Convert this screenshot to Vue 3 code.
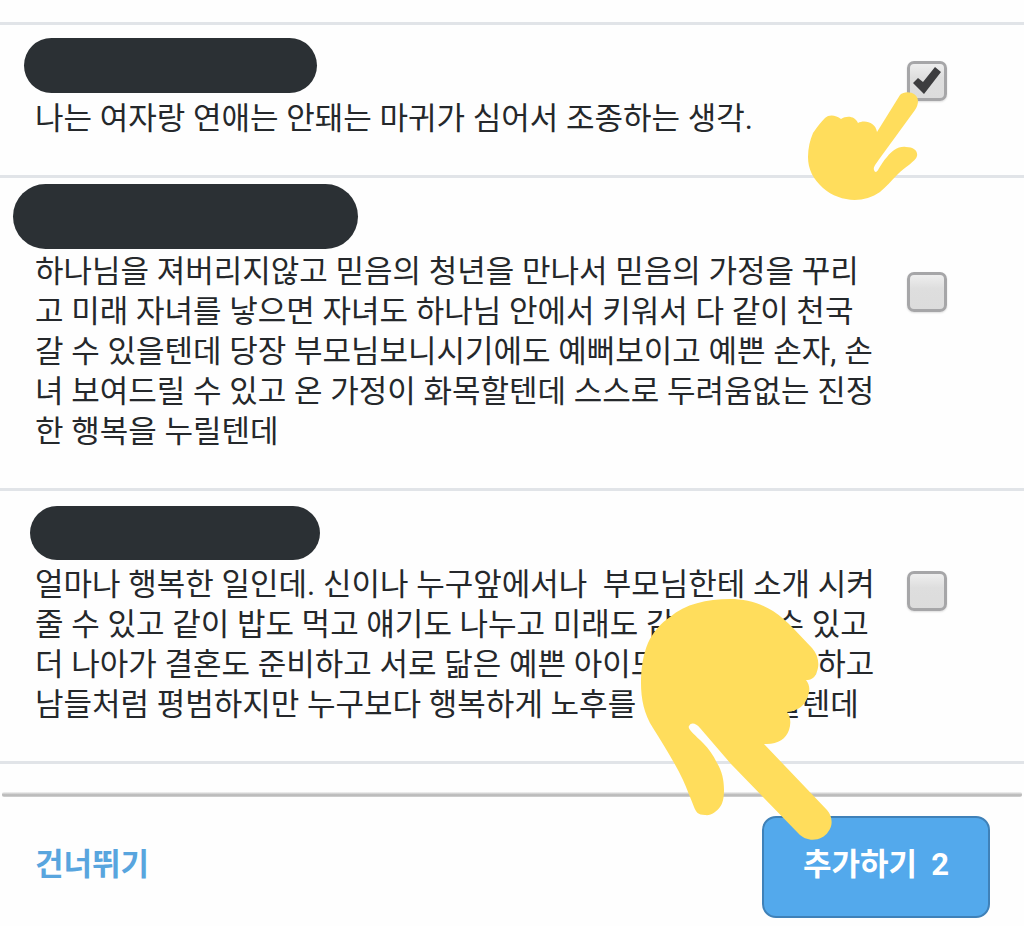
<script setup>
import { ref } from 'vue'

const items = ref([
  {
    id: 'first',
    checked: true,
    text: '나는 여자랑 연애는 안돼는 마귀가 심어서 조종하는 생각.',
  },
  {
    id: 'second',
    checked: false,
    text: '하나님을 져버리지않고 믿음의 청년을 만나서 믿음의 가정을 꾸리고 미래 자녀를 낳으면 자녀도 하나님 안에서 키워서 다 같이 천국 갈 수 있을텐데 당장 부모님보니시기에도 예뻐보이고 예쁜 손자, 손녀 보여드릴 수 있고 온 가정이 화목할텐데 스스로 두려움없는 진정한 행복을 누릴텐데',
  },
  {
    id: 'third',
    checked: false,
    text: '얼마나 행복한 일인데. 신이나 누구앞에서나 \u00a0부모님한테 소개 시켜줄 수 있고 같이 밥도 먹고 얘기도 나누고 미래도 같이 꿈꿀 수 있고 더 나아가 결혼도 준비하고 서로 닮은 예쁜 아이도 낳고 사랑도하고 남들처럼 평범하지만 누구보다 행복하게 노후를 이룰 수 있을텐데',
  },
])
</script>

<template>
  <main class="page">
    <ul class="list">
      <li v-for="item in items" :key="item.id" class="item">
        <div class="body">
          <div class="name"><span class="mask" :class="item.id"></span></div>
          <label class="text" :for="item.id">{{ item.text }}</label>
        </div>
        <div class="tick">
          <span class="box">
            <input :id="item.id" v-model="item.checked" type="checkbox" />
            <svg v-if="item.checked" class="mark" viewBox="0 0 40 40" aria-hidden="true">
              <path d="M6 22l5-5 5 4L28 6l6 5L17 33z" />
            </svg>
          </span>
        </div>
        <svg v-if="item.id === 'first'" class="hand up" viewBox="0 0 112 110" aria-hidden="true">
          <path d="M93 3C98-2 111 0 111 9c0 3-1 6-3 9L73 66c-4 6-7 9-6 12 1 3 3 2 4 0 3-5 6-10 9-13 5-6 11-11 19-10 8 0 12 4 11 9-1 5-12 11-20 19-6 6-11 12-17 17-17 12-41 10-57-4C6 87 1 77 1 65c0-9 2-17 5-24 4-6 8-11 12-15 4-4 11-3 16 1 6-4 14-3 17 4 7-4 18 0 19 9z" />
        </svg>
      </li>
    </ul>
    <footer class="bar">
      <button class="skip" type="button">건너뛰기</button>
      <button class="add" type="button"><span>추가하기</span><span>2</span></button>
      <svg class="hand down" viewBox="0 0 192 244" aria-hidden="true">
        <path d="M90 1c16 0 30 4 43 12 8 5 14 11 20 17l19 20c7 8 8 18 4 26-2 4-5 6-10 6 4 5 4 10 2 16-3 9-9 15-21 16 4 5 4 12 2 18-3 9-12 15-25 14l63 66c6 7 6 16 1 22-5 8-20 12-30 1L91 166 60 130c-4-5-9-6-11-2-2 3 6 9 14 17 6 6 10 12 14 20 5 8 7 17 7 27 0 7-1 13-4 17-4 5-9 9-15 8-7 0-9-3-11-8-4-10-7-18-11-27C35 165 23 146 13 130 4 116 1 101 1 85c0-15 2-28 7-40 5-11 13-20 22-26C45 6 67 1 90 1z" />
      </svg>
    </footer>
  </main>
</template>

<style>
body {
  margin: 0;
  background: #fefefe;
}
</style>

<style scoped>
.page {
  min-height: 100vh;
  box-sizing: border-box;
  padding-top: 22px;
  display: flex;
  flex-direction: column;
  overflow: hidden;
  background: #fefefe;
  color: #25282b;
  font-family: Roboto, "Noto Sans CJK KR", sans-serif;
}
.list {
  margin: 0;
  padding: 0;
  list-style: none;
  border-bottom: 3px solid #e1e4e8;
}
.item {
  position: relative;
  display: flex;
  border-top: 3px solid #e1e4e8;
}
.body {
  flex: 1;
  padding: 34px 32px 36px 35px;
}
.name {
  position: relative;
  height: 40px;
}
.mask {
  position: absolute;
  border-radius: 33px;
  background: #2b3034;
}
.mask.first {
  left: -11px;
  top: -21px;
  width: 293px;
  height: 55px;
}
.mask.second {
  left: -22px;
  top: -28px;
  width: 345px;
  height: 65px;
}
.mask.third {
  left: -5px;
  top: -19px;
  width: 290px;
  height: 54px;
}
.text {
  display: block;
  font-size: 31px;
  line-height: 40px;
}
.tick {
  display: flex;
  flex-direction: column;
  padding: 0 77px 9px 0;
}
.tick::before {
  content: "";
  flex: 36;
}
.tick::after {
  content: "";
  flex: 64;
}
.box {
  position: relative;
  display: block;
  width: 40px;
  height: 40px;
}
.box input {
  appearance: none;
  display: block;
  box-sizing: border-box;
  width: 100%;
  height: 100%;
  margin: 0;
  border: 3px solid #a6a6a8;
  border-radius: 7px;
  background: linear-gradient(#eeeeee, #dedede 40%, #dcdcdc);
  box-shadow: 0 1px 2px #dddddd;
}
.mark {
  position: absolute;
  inset: 0;
  width: 100%;
  height: 100%;
  fill: #3d3d3f;
  pointer-events: none;
}
.hand {
  position: absolute;
  z-index: 2;
  fill: #ffdd5c;
  pointer-events: none;
}
.hand.up {
  right: 105px;
  top: 67px;
  width: 112px;
  height: 110px;
}
.bar {
  position: relative;
  flex: 1;
  display: flex;
  justify-content: space-between;
  align-items: flex-start;
  margin-top: 32px;
  padding: 20px 34px 8px 35px;
}
.bar::before {
  content: "";
  position: absolute;
  left: 2px;
  right: 2px;
  top: -4px;
  height: 5px;
  border-radius: 2px;
  background: linear-gradient(#f4f4f4, #b4b4b4 60%, #d4d4d4);
}
.skip,
.add {
  border: 0;
  padding: 0;
  font: 700 31px/46px Roboto, "Noto Sans CJK KR", sans-serif;
}
.skip {
  margin-top: 26px;
  background: none;
  color: #58a5de;
}
.add {
  display: flex;
  justify-content: center;
  gap: 14px;
  box-sizing: border-box;
  width: 228px;
  height: 102px;
  padding-top: 24px;
  border: 2px solid #3f81b8;
  border-radius: 14px;
  background: #53a9ec;
  color: #ffffff;
}
.hand.down {
  right: 192px;
  bottom: 84px;
  width: 192px;
  height: 244px;
}
</style>
